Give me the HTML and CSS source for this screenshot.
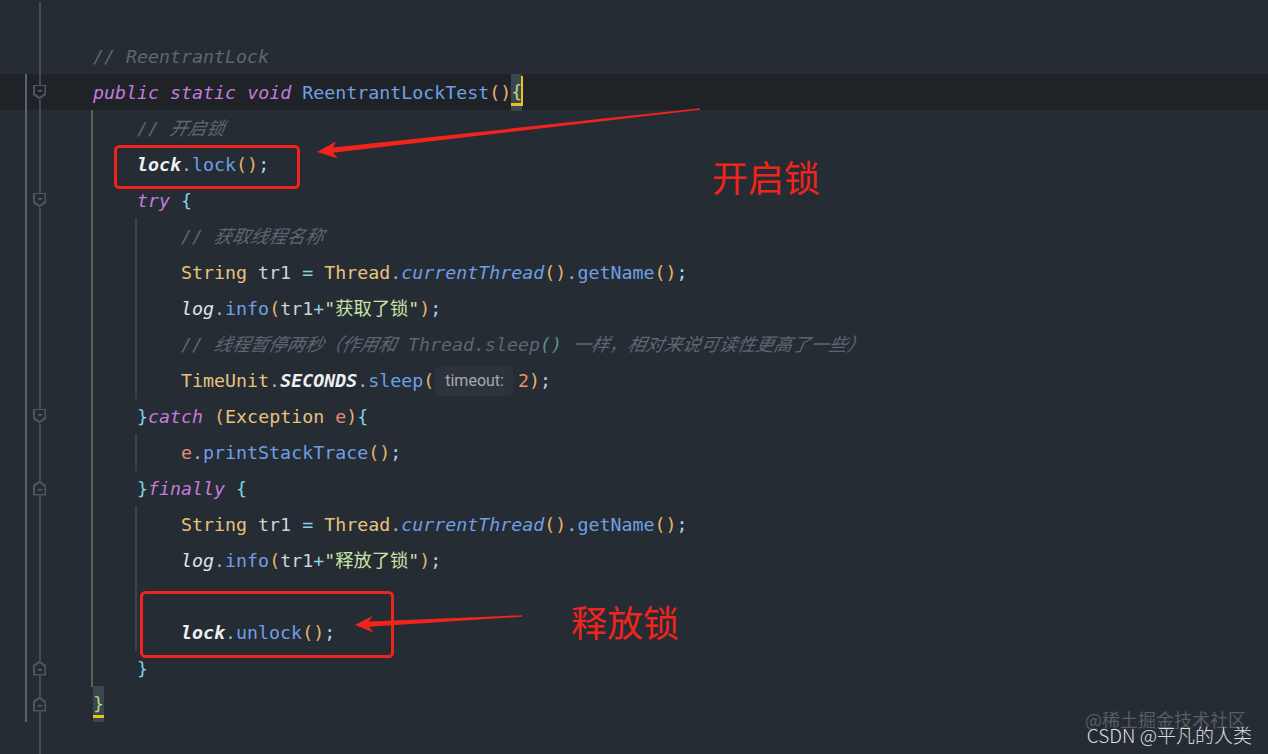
FILE: index.html
```html
<!DOCTYPE html>
<html lang="zh-CN">
<head>
  <meta charset="UTF-8">
  <title>ReentrantLock</title>
  <link rel="stylesheet" href="styles.css">
</head>
<body>

  <div class="editor">
    <!-- row 0 -->
    <div class="row"><div class="gut"></div><div class="ln"></div></div>
    <div class="row"><div class="gut"></div><div class="ln"><span class="i0"></span><span class="cm">// ReentrantLock</span></div></div>
    <div class="row cur"><div class="gut bar"><span class="fold down"></span></div><div class="ln"><span class="i0"></span><span class="kw">public</span> <span class="kw">static</span> <span class="kw">void</span> <span class="fn">ReentrantLockTest</span><span class="pr">()</span><span class="bm open">{</span></div></div>
    <div class="row"><div class="gut bar"></div><div class="ln"><span class="i0"></span><span class="ig hot"></span><span class="cm">// <span class="sk">开启锁</span></span></div></div>
    <div class="row"><div class="gut bar"></div><div class="ln"><span class="i0"></span><span class="ig hot"></span><span class="fld">lock</span><span class="pu">.</span><span class="fn">lock</span><span class="pr">()</span><span class="sc">;</span></div></div>
    <div class="row"><div class="gut bar"><span class="fold down"></span></div><div class="ln"><span class="i0"></span><span class="ig hot"></span><span class="kw">try</span> <span class="br">{</span></div></div>
    <div class="row"><div class="gut bar"></div><div class="ln"><span class="i0"></span><span class="ig hot"></span><span class="ig"></span><span class="cm">// <span class="sk">获取线程名称</span></span></div></div>
    <div class="row"><div class="gut bar"></div><div class="ln"><span class="i0"></span><span class="ig hot"></span><span class="ig"></span><span class="ty">String</span> <span class="var">tr1</span> <span class="op">=</span> <span class="ty">Thread</span><span class="pu">.</span><span class="fi">currentThread</span><span class="pr">()</span><span class="pu">.</span><span class="fn">getName</span><span class="pr">()</span><span class="sc">;</span></div></div>
    <div class="row"><div class="gut bar"></div><div class="ln"><span class="i0"></span><span class="ig hot"></span><span class="ig"></span><span class="st">log</span><span class="pu">.</span><span class="fn">info</span><span class="pr">(</span><span class="var">tr1</span><span class="op">+</span><span class="str">"获取了锁"</span><span class="pr">)</span><span class="sc">;</span></div></div>
    <div class="row"><div class="gut bar"></div><div class="ln"><span class="i0"></span><span class="ig hot"></span><span class="ig"></span><span class="cm">// <span class="sk">线程暂停两秒（作用和</span> Thread.sleep<span class="cp">()</span> <span class="sk">一样，相对来说可读性更高了一些）</span></span></div></div>
    <div class="row"><div class="gut bar"></div><div class="ln"><span class="i0"></span><span class="ig hot"></span><span class="ig"></span><span class="ty">TimeUnit</span><span class="pu">.</span><span class="fld">SECONDS</span><span class="pu">.</span><span class="fn">sleep</span><span class="pr">(</span><span class="hint">timeout:</span><span class="num">2</span><span class="pr">)</span><span class="sc">;</span></div></div>
    <div class="row"><div class="gut bar"><span class="fold down"></span></div><div class="ln"><span class="i0"></span><span class="ig hot"></span><span class="br">}</span><span class="kw">catch</span> <span class="pr">(</span><span class="ty">Exception</span> <span class="par">e</span><span class="pr">)</span><span class="br">{</span></div></div>
    <div class="row"><div class="gut bar"></div><div class="ln"><span class="i0"></span><span class="ig hot"></span><span class="ig"></span><span class="par">e</span><span class="pu">.</span><span class="fn">printStackTrace</span><span class="pr">()</span><span class="sc">;</span></div></div>
    <div class="row"><div class="gut bar"><span class="fold up"></span></div><div class="ln"><span class="i0"></span><span class="ig hot"></span><span class="br">}</span><span class="kw">finally</span> <span class="br">{</span></div></div>
    <div class="row"><div class="gut bar"></div><div class="ln"><span class="i0"></span><span class="ig hot"></span><span class="ig"></span><span class="ty">String</span> <span class="var">tr1</span> <span class="op">=</span> <span class="ty">Thread</span><span class="pu">.</span><span class="fi">currentThread</span><span class="pr">()</span><span class="pu">.</span><span class="fn">getName</span><span class="pr">()</span><span class="sc">;</span></div></div>
    <div class="row"><div class="gut bar"></div><div class="ln"><span class="i0"></span><span class="ig hot"></span><span class="ig"></span><span class="st">log</span><span class="pu">.</span><span class="fn">info</span><span class="pr">(</span><span class="var">tr1</span><span class="op">+</span><span class="str">"释放了锁"</span><span class="pr">)</span><span class="sc">;</span></div></div>
    <div class="row"><div class="gut bar"></div><div class="ln"><span class="i0"></span><span class="ig hot"></span><span class="ig"></span></div></div>
    <div class="row"><div class="gut bar"></div><div class="ln"><span class="i0"></span><span class="ig hot"></span><span class="ig"></span><span class="fld">lock</span><span class="pu">.</span><span class="fn">unlock</span><span class="pr">()</span><span class="sc">;</span></div></div>
    <div class="row"><div class="gut bar"><span class="fold up"></span></div><div class="ln"><span class="i0"></span><span class="ig hot"></span><span class="br">}</span></div></div>
    <div class="row"><div class="gut bar"><span class="fold up"></span></div><div class="ln"><span class="i0"></span><span class="bm close">}</span></div></div>
    <div class="row"><div class="gut"></div><div class="ln"></div></div>
  </div>

  <!-- red annotations drawn over the screenshot -->
  <svg class="marks" width="1268" height="754" viewBox="0 0 1268 754">
    <rect x="115.5" y="146.5" width="183" height="41" rx="4" fill="none" stroke="#f0241c" stroke-width="3"/>
    <rect x="141.5" y="592.5" width="251" height="64" rx="4" fill="none" stroke="#f0241c" stroke-width="3"/>
    <polygon fill="#f0241c" points="317,152 336,141.5 333,147.6 700,108.3 700,109.8 333,152.8 338,158.5"/>
    <polygon fill="#f0241c" points="355,625 372.6,615.8 368.9,621.6 522,615.2 522,616.8 369.1,626.8 373.4,632.5"/>
  </svg>
  <div class="note note-open">开启锁</div>
  <div class="note note-free">释放锁</div>

  <div class="wm">
    <div class="wm-juejin">@稀土掘金技术社区</div>
    <div class="wm-csdn">CSDN @平凡的人类</div>
  </div>

</body>
</html>
```

FILE: styles.css
```css
body {
  margin: 0;
  background: #262c33;
  width: 1268px;
  height: 754px;
  overflow: hidden;
  position: relative;
}

.editor {
  padding-top: 2px;
  font-family: "DejaVu Sans Mono", "Noto Sans CJK SC", monospace;
  font-size: 18.3px;
  color: #c8ccd2;
}

.row {
  display: flex;
  height: 36px;
}

.row.cur {
  background: #1f2328;
}

/* gutter: fold line at x=40, change bar at x=26 */
.gut {
  width: 49px;
  flex-shrink: 0;
  display: flex;
  align-items: center;
  background: linear-gradient(#444b53, #444b53) 39px 0 / 2px 100% no-repeat;
}

.gut.bar {
  background:
    linear-gradient(#444b53, #444b53) 39px 0 / 2px 100% no-repeat,
    linear-gradient(#59616a, #59616a) 25px 0 / 2px 100% no-repeat;
}

.fold {
  width: 13px;
  height: 15px;
  margin-left: 33px;
  position: relative;
  background: #262c33;
}

.cur .fold {
  background: #1f2328;
}

.fold::before,
.fold::after {
  content: "";
  position: absolute;
}

.fold::before {
  inset: 0;
  background: #4d555d;
}

.fold::after {
  left: 1.5px;
  right: 1.5px;
  top: 1.5px;
  bottom: 1.5px;
  background-color: #262c33;
  background-image: linear-gradient(#5a626b, #5a626b);
  background-size: 4px 1.5px;
  background-repeat: no-repeat;
}

.cur .fold::after {
  background-color: #1f2328;
}

.fold.down::before {
  clip-path: polygon(0 0, 100% 0, 100% 70%, 50% 100%, 0 70%);
}

.fold.down::after {
  bottom: 2.5px;
  clip-path: polygon(0 0, 100% 0, 100% 66%, 50% 100%, 0 66%);
  background-position: center 4px;
}

.fold.up::before {
  clip-path: polygon(50% 0, 100% 30%, 100% 100%, 0 100%, 0 30%);
}

.fold.up::after {
  top: 2.5px;
  clip-path: polygon(50% 0, 100% 34%, 100% 100%, 0 100%, 0 34%);
  background-position: center 6px;
}

.ln {
  flex: 1;
  line-height: 36px;
  white-space: pre;
  padding-top: 1px;
}

.i0,
.ig,
.bm {
  display: inline-block;
  height: 36px;
  vertical-align: top;
}

.i0,
.ig {
  width: 4ch;
}

.ig {
  position: relative;
}

.ig::before {
  content: "";
  position: absolute;
  left: -2px;
  top: -1px;
  bottom: 0;
  width: 1.5px;
  background: #3c434b;
}

.ig.hot::before {
  background: #5a6052;
}

/* tokens */
.cm { color: #5c6771; font-style: italic; }
.sk { display: inline-block; transform: skewX(-12deg); }
.cp { color: #5a8f94; }
.kw { color: #c57bdb; font-style: italic; }
.fn { color: #6f9fe6; }
.fi { color: #6f9fe6; font-style: italic; }
.ty { color: #e8c27d; }
.pr { color: #e3b56b; }
.br { color: #7fd3ea; }
.op { color: #86d3e6; }
.pu { color: #8fb8c4; }
.sc { color: #a9d6e8; }
.fld { color: #eef0f2; font-weight: bold; font-style: italic; }
.st { color: #e2e5e9; font-style: italic; }
.var { color: #cfd3d8; }
.par { color: #e48c7b; }
.num { color: #f08d6a; }
.str { color: #c9e2a8; }

.hint {
  display: inline-block;
  vertical-align: middle;
  font-family: "Roboto", "Liberation Sans", sans-serif;
  font-size: 16px;
  color: #a3aab1;
  background: #2d333a;
  border-radius: 6px;
  height: 30px;
  line-height: 30px;
  padding: 0 9px 0 10px;
  margin: 0 5px 0 1px;
  position: relative;
  top: -1px;
}

/* brace match */
.bm {
  background: #3a4751;
  color: #b7d97a;
  position: relative;
  margin-top: -1px;
}

.bm::after {
  content: "";
  position: absolute;
  left: 0;
  right: 0;
  bottom: 5px;
  height: 3px;
  background: #e8c11a;
}

.bm.open {
  height: 37px;
}

.bm.open::before {
  content: "";
  position: absolute;
  right: -1px;
  top: 2px;
  bottom: 5px;
  width: 2px;
  background: #e8c11a;
}

.bm.close::after {
  bottom: 4px;
}

/* annotations */
.marks {
  position: absolute;
  left: 0;
  top: 0;
  pointer-events: none;
}

.note {
  position: absolute;
  font-family: "Noto Sans CJK SC", sans-serif;
  font-size: 36px;
  line-height: 1;
  color: #f0241c;
}

.note-open {
  left: 712px;
  top: 158px;
}

.note-free {
  left: 571px;
  top: 603px;
}

.wm {
  position: absolute;
  right: 16px;
  bottom: 8px;
  font-family: "Noto Sans CJK SC", sans-serif;
  text-align: right;
}

.wm-juejin {
  font-size: 18px;
  line-height: 18px;
  color: rgba(150, 158, 166, 0.45);
  margin-right: 6px;
  margin-bottom: -4px;
}

.wm-csdn {
  font-size: 19px;
  line-height: 22px;
  color: #dcdfe2;
  font-weight: 300;
}
```
